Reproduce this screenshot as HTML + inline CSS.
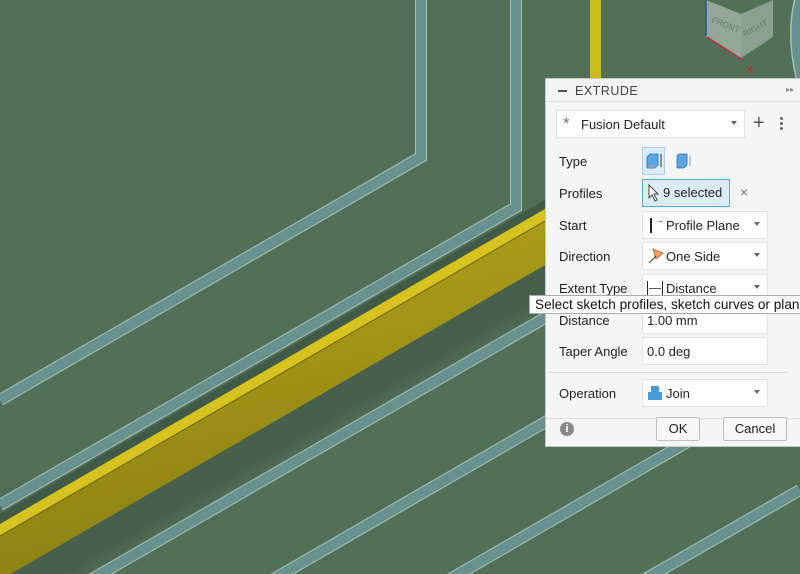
<!DOCTYPE html>
<html><head><meta charset="utf-8"><style>
*{box-sizing:border-box;margin:0;padding:0}
html,body{width:800px;height:574px;overflow:hidden}
body{background:#526f58;font-family:"Liberation Sans",sans-serif;position:relative}
svg.bg{position:absolute;left:0;top:0}
.panel{position:absolute;left:545px;top:78px;width:256px;height:369px;background:#f5f5f5;border:1px solid #c8c8c8;font-size:13px;color:#222}
.hdr{height:23px;border-bottom:1px solid #ddd;background:#f3f3f3;position:relative}
.hdr .t{position:absolute;left:29px;top:5px;letter-spacing:.5px;color:#444;font-size:12.5px}
.abs{position:absolute}
.lbl{position:absolute;left:13px}
.box{position:absolute;background:#fff;border:1px solid #e2e2e2}
.arr{position:absolute;right:7px;top:10px;width:0;height:0;border-left:3.5px solid transparent;border-right:3.5px solid transparent;border-top:4px solid #666}
.btn{position:absolute;border:1px solid #bdbdbd;border-radius:2px;background:#f7f7f7;text-align:center;line-height:22px}
.tip{position:absolute;left:529px;top:295px;width:271px;height:19px;background:#fff;border:1px solid #aaa;border-right:none;font-size:13.6px;line-height:17px;padding-left:5px;color:#111;white-space:nowrap;overflow:hidden}
</style></head><body>
<svg class="bg" width="800" height="574" viewBox="0 0 800 574">
<defs>
<linearGradient id="yg" x1="0" y1="0" x2="0.3" y2="1"><stop offset="0" stop-color="#b8a81c"/><stop offset="1" stop-color="#8a7f12"/></linearGradient>
<filter id="bl"><feGaussianBlur stdDeviation="6"/></filter>
</defs>
<polygon points="700,120 0,524 0,620 700,215" fill="#3d5443" opacity=".55" filter="url(#bl)"/>
<polygon points="545,200 0,514 0,526 545,212" fill="#3f5a46"/>
<rect x="590" y="0" width="11" height="90" fill="#cdbb1d"/>
<polygon points="545,209 0,524 0,580 545,265" fill="url(#yg)"/>
<polygon points="545,209 0,524 0,536 545,221" fill="#d6c31f"/>
<line x1="545" y1="221" x2="0" y2="536" stroke="#6d6410" stroke-width="1"/>
<g fill="none" stroke-linejoin="miter">
<g stroke="#a9c2b4" stroke-width="12">
<polyline points="421,0 421,157 0,400"/>
<polyline points="516,0 516,207 0,505"/>
<line x1="800" y1="171" x2="0" y2="632"/>
<line x1="800" y1="275" x2="0" y2="737"/>
<line x1="800" y1="377" x2="0" y2="839"/>
<line x1="800" y1="490" x2="600" y2="605"/>
</g>
<g stroke="#66918f" stroke-width="10">
<polyline points="421,0 421,157 0,400"/>
<polyline points="516,0 516,207 0,505"/>
<line x1="800" y1="171" x2="0" y2="632"/>
<line x1="800" y1="275" x2="0" y2="737"/>
<line x1="800" y1="377" x2="0" y2="839"/>
<line x1="800" y1="490" x2="600" y2="605"/>
</g>
<path d="M800,0 Q790,40 805,90" stroke="#a9c2b4" stroke-width="12"/>
<path d="M800,0 Q790,40 805,90" stroke="#66918f" stroke-width="9"/>
</g>
<polygon points="706,0 741,14 741,58 706,37" fill="#94a89a"/>
<polygon points="741,14 773,0 773,37 741,58" fill="#8aa091"/>
<line x1="706" y1="0" x2="706" y2="36" stroke="#2a4fb0" stroke-width="1.5"/>
<line x1="707" y1="37" x2="743" y2="60" stroke="#c03030" stroke-width="1.5"/>
<text x="711" y="22" font-size="8.5" fill="#6a7a70" transform="rotate(22 711 22)" font-family="Liberation Sans">FRONT</text>
<text x="745" y="37" font-size="8.5" fill="#6a7a70" transform="rotate(-28 745 37)" font-family="Liberation Sans">RIGHT</text>
<text x="746" y="73" font-size="11" fill="#d02020" font-family="Liberation Sans">X</text>
</svg>

<div class="panel">
 <div class="hdr">
  <div class="abs" style="left:12px;top:11px;width:9px;height:2px;background:#555"></div>
  <div class="t">EXTRUDE</div>
  <div class="abs" style="right:6px;top:6px;font-size:8px;color:#888">▸▸</div>
 </div>
 <div class="box" style="left:10px;top:31px;width:189px;height:28px">
  <span class="abs" style="left:6px;top:3px;font-size:17px;color:#777">*</span>
  <span class="abs" style="left:24px;top:6px">Fusion Default</span>
  <div class="arr"></div>
 </div>
 <div class="abs" style="left:207px;top:33px;font-size:20px;color:#555">+</div>
 <div class="abs" style="left:234px;top:38px;width:3px;height:3px;background:#666;border-radius:50%;box-shadow:0 5px 0 #666,0 10px 0 #666"></div>

 <div class="lbl" style="top:75px">Type</div>
 <div class="abs" style="left:96px;top:68px;width:23px;height:28px;background:#d8ebf6;border:1px solid #a8cfe8"></div>
 <svg class="abs" style="left:99px;top:72px" width="18" height="20"><polygon points="2,6 5,3 13,3 13,14 10,17 2,17" fill="#5aa6e0" stroke="#2b6ea8" stroke-width=".8"/><polygon points="2,17 10,17 13,14 5,14" fill="#aaa" opacity=".6"/><line x1="16" y1="3" x2="16" y2="16" stroke="#333"/></svg>
 <svg class="abs" style="left:128px;top:72px" width="18" height="20"><path d="M3,17 L3,6 Q3,3 6,3 L13,3 L13,14 L10,17 Z" fill="#5aa6e0" stroke="#2b6ea8" stroke-width=".8"/><line x1="16" y1="5" x2="16" y2="15" stroke="#999"/></svg>

 <div class="lbl" style="top:107px">Profiles</div>
 <div class="abs" style="left:96px;top:100px;width:88px;height:28px;background:#dcecf6;border:1px solid #5aa8d8"></div>
 <svg class="abs" style="left:102px;top:105px" width="12" height="18"><path d="M1,1 L1,14 L4,11 L7,17 L9,16 L6,10 L10,10 Z" fill="#fff" stroke="#444" stroke-width="1"/></svg>
 <div class="abs" style="left:117px;top:106px">9 selected</div>
 <div class="abs" style="left:194px;top:105px;color:#777;font-size:14px">×</div>

 <div class="lbl" style="top:139px">Start</div>
 <div class="box" style="left:96px;top:132px;width:126px;height:28px">
  <div class="abs" style="left:7px;top:6px;width:2px;height:15px;background:#223"></div>
  <div class="abs" style="left:12px;top:3px;font-size:9px">→</div>
  <span class="abs" style="left:23px;top:6px">Profile Plane</span><div class="arr"></div>
 </div>

 <div class="lbl" style="top:170px">Direction</div>
 <div class="box" style="left:96px;top:163px;width:126px;height:28px">
  <svg class="abs" style="left:4px;top:4px" width="18" height="18"><polygon points="6,2 16,6 9,12" fill="#f0a060" stroke="#b06030" stroke-width=".8"/><line x1="2" y1="16" x2="9" y2="9" stroke="#333"/></svg>
  <span class="abs" style="left:23px;top:6px">One Side</span><div class="arr"></div>
 </div>

 <div class="lbl" style="top:202px">Extent Type</div>
 <div class="box" style="left:96px;top:195px;width:126px;height:28px">
  <div class="abs" style="left:4px;top:6px;width:1px;height:14px;background:#223"></div>
  <div class="abs" style="left:19px;top:6px;width:1px;height:14px;background:#223"></div>
  <div class="abs" style="left:6px;top:13px;width:12px;height:1px;background:#555"></div>
  <span class="abs" style="left:23px;top:6px">Distance</span><div class="arr"></div>
 </div>

 <div class="lbl" style="top:234px">Distance</div>
 <div class="box" style="left:96px;top:227px;width:126px;height:28px"><span class="abs" style="left:4px;top:6px">1.00 mm</span></div>
 <div class="lbl" style="top:265px">Taper Angle</div>
 <div class="box" style="left:96px;top:258px;width:126px;height:28px"><span class="abs" style="left:4px;top:6px">0.0 deg</span></div>
 <div class="abs" style="left:3px;top:293px;width:238px;height:1px;background:#ddd"></div>

 <div class="lbl" style="top:307px">Operation</div>
 <div class="box" style="left:96px;top:300px;width:126px;height:28px">
  <div class="abs" style="left:8px;top:6px;width:8px;height:8px;background:#4a9ad8"></div>
  <div class="abs" style="left:5px;top:12px;width:14px;height:8px;background:#4a9ad8"></div>
  <span class="abs" style="left:23px;top:6px">Join</span><div class="arr"></div>
 </div>
 <div class="abs" style="left:0;top:339px;width:256px;height:1px;background:#ddd"></div>
 <div class="abs" style="left:14px;top:343px;width:14px;height:14px;border-radius:50%;background:#888;color:#fff;font-size:11px;font-weight:bold;text-align:center;line-height:14px">i</div>
 <div class="btn" style="left:110px;top:338px;width:44px;height:24px">OK</div>
 <div class="btn" style="left:177px;top:338px;width:64px;height:24px">Cancel</div>
</div>
<div class="tip">Select sketch profiles, sketch curves or planar</div>
</body></html>
